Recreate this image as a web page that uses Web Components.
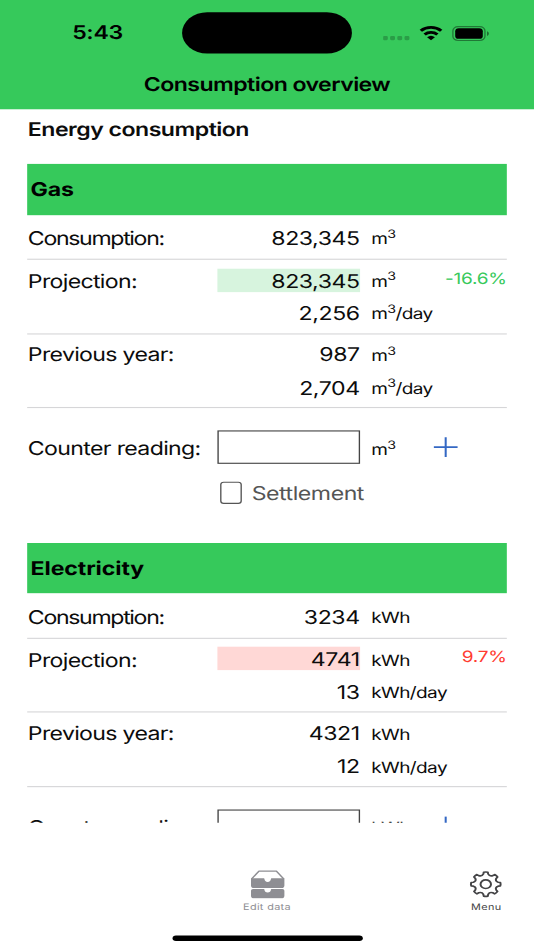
<!DOCTYPE html>
<html lang="en">
<head>
<meta charset="utf-8">
<title>Consumption overview</title>
<style>
  html, body {
    margin: 0;
    width: 534px;
    height: 950px;
    overflow: hidden;
    background: #fff;
  }
</style>
</head>
<body>
<phone-screen>
  <status-bar slot="top" time="5:43"></status-bar>
  <nav-title slot="top">Consumption overview</nav-title>

  <page-heading>Energy consumption</page-heading>

  <meter-section name="Gas">
    <meter-row label="Consumption:" tracking="-.98px">
      <meter-value amount="823,345">m<sup>3</sup></meter-value>
    </meter-row>
    <meter-row label="Projection:" change="-16.6%">
      <meter-value amount="823,345" mark="good">m<sup>3</sup></meter-value>
      <meter-value amount="2,256">m<sup>3</sup>/day</meter-value>
    </meter-row>
    <meter-row label="Previous year:">
      <meter-value amount="987">m<sup>3</sup></meter-value>
      <meter-value amount="2,704">m<sup>3</sup>/day</meter-value>
    </meter-row>
    <counter-form>m<sup>3</sup></counter-form>
  </meter-section>

  <meter-section name="Electricity">
    <meter-row label="Consumption:" tracking="-.98px">
      <meter-value amount="3234">kWh</meter-value>
    </meter-row>
    <meter-row label="Projection:" change="9.7%">
      <meter-value amount="4741" mark="bad">kWh</meter-value>
      <meter-value amount="13">kWh/day</meter-value>
    </meter-row>
    <meter-row label="Previous year:">
      <meter-value amount="4321">kWh</meter-value>
      <meter-value amount="12">kWh/day</meter-value>
    </meter-row>
    <counter-form>kWh</counter-form>
  </meter-section>

  <tab-bar slot="bottom"></tab-bar>
</phone-screen>

<script>
class BaseElement extends HTMLElement {
  constructor() {
    super();
    this.attachShadow({ mode: "open" });
  }

  connectedCallback() {
    this.shadowRoot.innerHTML = this.render();
  }
}

// 393x852pt screen, stretched over the window
class PhoneScreen extends BaseElement {
  render() {
    return `
    <style>
      :host {
        display: flex;
        flex-direction: column;
        width: 393px;
        height: 852px;
        transform: scale(1.3588, 1.115);
        transform-origin: 0 0;
        background: #fff;
        color: #0c0c0c;
        font: 17px/20px Inter, "Liberation Sans", sans-serif;
        text-rendering: geometricPrecision;
        --green: #36c95b;
      }
      header {
        flex: none;
        height: 97.9px;
        background: var(--green);
        color: #000;
      }
      main {
        flex: none;
        box-sizing: border-box;
        height: 639.8px;
        padding: 0 20px;
        overflow: hidden;
      }
    </style>
    <header><slot name="top"></slot></header>
    <main><slot></slot></main>
    <slot name="bottom"></slot>
  `;
  }
}

class StatusBar extends BaseElement {
  render() {
    return `
    <style>
      :host {
        display: grid;
        grid-template-columns: 134px 125px 134px;
        align-items: center;
        height: 37px;
        padding-top: 11.3px;
      }
      .time {
        padding: 1.4px 0 0 9.5px;
        text-align: center;
        font-weight: 600;
        letter-spacing: -.25px;
      }
      .island {
        height: 37px;
        border-radius: 19px;
        background: #000;
      }
      .icons {
        display: flex;
        align-items: center;
        padding-left: 23px;
      }
      svg { display: block; }
    </style>
    <span class="time">${this.getAttribute("time")}</span>
    <div class="island"></div>
    <div class="icons">
      <svg width="79" height="14" viewBox="0 0 79 14">
        <g fill="#000" opacity=".22">
          <rect x="-.2" y="9.2" width="3.6" height="3.8" rx="1"/>
          <rect x="5.1" y="9.2" width="3.6" height="3.8" rx="1"/>
          <rect x="10.4" y="9.2" width="3.6" height="3.8" rx="1"/>
          <rect x="15.7" y="9.2" width="3.6" height="3.8" rx="1"/>
        </g>
        <g fill="none" stroke="#000" stroke-width="2.5">
          <path d="M27.700 4.500a11 11 0 0 1 15 0"/>
          <path d="M30.500 7.900a7 7 0 0 1 9.400 0"/>
        </g>
        <path d="M32.300 10.500a4.200 4.200 0 0 1 5.800 0L35.200 13.200z"/>
        <rect x="51.300" y=".9" width="23.600" height="12.400" rx="3.800" fill="none" stroke="#000" stroke-opacity=".4"/>
        <rect x="53" y="2.400" width="20.300" height="9.400" rx="2.600"/>
        <path d="M76.400 5v4.200c.9-.4 1.400-1.200 1.400-2.100s-.5-1.700-1.400-2.100z" opacity=".45"/>
      </svg>
    </div>
  `;
  }
}

class NavTitle extends BaseElement {
  render() {
    return `
    <style>
      :host {
        display: block;
        padding-top: 18.4px;
        text-align: center;
        font-weight: 600;
        letter-spacing: -.42px;
      }
    </style>
    <slot></slot>
  `;
  }
}

class PageHeading extends BaseElement {
  render() {
    return `
    <style>
      :host {
        display: block;
        padding: 9.4px 0 19.6px .5px;
        font-weight: 600;
        letter-spacing: -.38px;
      }
    </style>
    <slot></slot>
  `;
  }
}

class MeterSection extends BaseElement {
  render() {
    return `
    <style>
      :host {
        display: block;
        height: 339.8px;
      }
      h2 {
        margin: 0 0 2.4px;
        padding: 3px 0 0 2.5px;
        background: var(--green);
        color: #000;
        font-size: 17px;
        font-weight: 700;
        letter-spacing: -.08px;
        line-height: 42.8px;
      }
    </style>
    <h2>${this.getAttribute("name")}</h2>
    <slot></slot>
  `;
  }
}

class MeterRow extends BaseElement {
  render() {
    const change = this.getAttribute("change") || "";
    const tracking = this.getAttribute("tracking") || "-.5px";
    const color = change.startsWith("-") ? "#36c95b" : "#ff3b30";
    return `
    <style>
      :host {
        display: grid;
        grid-template-columns: 140px 1fr auto;
        padding: 3.9px 0 3.7px;
        border-bottom: 1px solid #d6d6d8;
      }
      .label {
        padding: 3.1px 0 0 .5px;
        line-height: 26px;
        letter-spacing: ${tracking};
      }
      .change {
        color: ${color};
        font-size: 14px;
        letter-spacing: -.15px;
        line-height: 27px;
      }
    </style>
    <span class="label">${this.getAttribute("label")}</span>
    <div class="values"><slot></slot></div>
    <span class="change">${change}</span>
  `;
  }
}

const marks = { good: "#d7f4de", bad: "#ffd8d6" };

class MeterValue extends BaseElement {
  render() {
    const mark = marks[this.getAttribute("mark")] || "transparent";
    return `
    <style>
      :host {
        display: grid;
        grid-template-columns: 104.7px auto;
        justify-content: start;
        align-items: center;
        height: 29.1px;
        white-space: nowrap;
      }
      .amount {
        padding-top: 3px;
        background: ${mark};
        text-align: right;
        letter-spacing: -.32px;
        line-height: 18px;
      }
      .unit {
        padding: 3.6px 0 0 8.5px;
        font-size: 14px;
        letter-spacing: -.45px;
      }
      ::slotted(sup) {
        font-size: 10.5px;
        line-height: 0;
        vertical-align: 5.7px;
      }
    </style>
    <span class="amount">${this.getAttribute("amount")}</span>
    <span class="unit"><slot></slot></span>
  `;
  }
}

class CounterForm extends BaseElement {
  render() {
    return `
    <style>
      :host { display: block; padding-top: 20px; }
      .reading {
        display: grid;
        grid-template-columns: 140px 104.7px 53.9px auto;
        align-items: center;
        height: 30px;
      }
      .label {
        padding: 3px 0 0 .5px;
        letter-spacing: -.48px;
      }
      .field {
        box-sizing: border-box;
        height: 30px;
        border: 1px solid #444;
      }
      .unit {
        padding: 4.6px 0 0 8.5px;
        font-size: 14px;
        letter-spacing: -.45px;
      }
      ::slotted(sup) {
        font-size: 10.5px;
        line-height: 0;
        vertical-align: 5.7px;
      }
      .settle {
        display: flex;
        align-items: center;
        padding: 14.6px 0 0 142.3px;
        color: #555;
        letter-spacing: -.33px;
      }
      .settle span { padding-top: 2px; }
      .box {
        box-sizing: border-box;
        width: 15.6px;
        height: 19.6px;
        margin-right: 7.3px;
        border: 1.3px solid #555;
        border-radius: 2.6px;
      }
      svg { display: block; }
    </style>
    <div class="reading">
      <span class="label">Counter reading:</span>
      <div class="field"></div>
      <span class="unit"><slot></slot></span>
      <svg width="18" height="18" viewBox="0 0 18 18" stroke="#3468c4" stroke-width="1.5">
        <path d="M9 .2v17.6M.2 9h17.6"/>
      </svg>
    </div>
    <div class="settle"><div class="box"></div><span>Settlement</span></div>
  `;
  }
}

class TabBar extends BaseElement {
  render() {
    // gear outline: eight rounded teeth around the hub
    let gear = "";
    for (let i = 0; i < 8; i++) {
      const pt = (deg, r) => {
        const a = ((deg + i * 45 - 90) * Math.PI) / 180;
        return `${(12 + r * Math.cos(a)).toFixed(2)} ${(12 + r * Math.sin(a)).toFixed(2)}`;
      };
      gear += `${i ? "L" : "M"}${pt(-8, 10.4)}Q${pt(0, 10.7)} ${pt(8, 10.4)}L${pt(11, 8.9)}Q${pt(22.5, 7)} ${pt(34, 8.9)}`;
    }
    return `
    <style>
      :host {
        flex: 1;
        display: flex;
        flex-direction: column;
        justify-content: space-between;
        padding: 42.2px 0 8px;
      }
      .tabs {
        display: grid;
        grid-template-columns: 1fr 60px 1fr;
      }
      .tab {
        display: flex;
        flex-direction: column;
        align-items: center;
        font-size: 8px;
        line-height: 10px;
        letter-spacing: .25px;
      }
      .edit { grid-column: 2; color: #8e8e93; }
      .menu { justify-self: end; padding-right: 22.6px; color: #444446; }
      svg { display: block; height: 26px; margin-bottom: 2px; }
      .home {
        width: 140px;
        height: 5px;
        margin: 0 auto;
        border-radius: 3px;
        background: #000;
      }
    </style>
    <div class="tabs">
      <div class="tab edit">
        <svg width="26" viewBox="0 0 26 26">
          <path d="M1.2 8.2L6.6 1.3h12.8l5.4 6.9" fill="none" stroke="currentColor" stroke-width="1.2" stroke-linejoin="round"/>
          <path fill="currentColor" d="M.7 7.7h9.5c.2 0 .4.2.4.5 0 1.7 1 2.9 2.4 2.9s2.4-1.2 2.4-2.9c0-.3.2-.5.4-.5h9.5v6.400q0 2.300-2.300 2.300H3q-2.300 0-2.300-2.300z"/>
          <path fill="currentColor" d="M2.2 17.3h8c.2 0 .4.2.4.5 0 1.6 1 2.7 2.4 2.7s2.4-1.1 2.4-2.7c0-.3.2-.5.4-.5h8q1.5 0 1.5 1.5v4.500q0 2.300-2.300 2.300H3q-2.300 0-2.300-2.300v-4.500q0-1.500 1.500-1.500z"/>
        </svg>
        <span>Edit data</span>
      </div>
      <div class="tab menu">
        <svg width="25" viewBox="0 0 24 24" fill="none" stroke="currentColor" stroke-width="1.4" stroke-linejoin="round">
          <path d="${gear}Z"/>
          <circle cx="12" cy="12" r="3.7"/>
        </svg>
        <span>Menu</span>
      </div>
    </div>
    <div class="home"></div>
  `;
  }
}

customElements.define("phone-screen", PhoneScreen);
customElements.define("status-bar", StatusBar);
customElements.define("nav-title", NavTitle);
customElements.define("page-heading", PageHeading);
customElements.define("meter-section", MeterSection);
customElements.define("meter-row", MeterRow);
customElements.define("meter-value", MeterValue);
customElements.define("counter-form", CounterForm);
customElements.define("tab-bar", TabBar);
</script>
</body>
</html>
